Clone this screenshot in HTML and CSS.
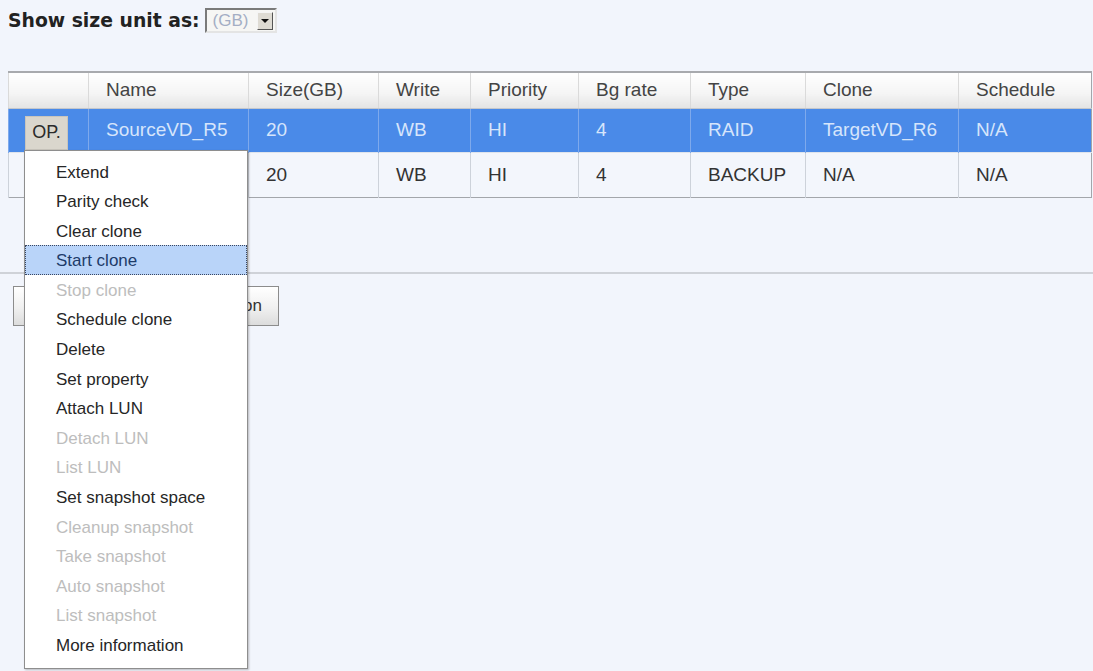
FILE: index.html
```html
<!DOCTYPE html>
<html lang="en">
<head>
  <meta charset="UTF-8" />
  <title>Virtual disks</title>
  <link rel="stylesheet" href="styles.css">
</head>
<body>

<div class="page">
  <!-- size unit selector -->
  <div class="toolbar">
    <span class="unit-label">Show size unit as:</span>
    <div class="unit-select">
      <span class="unit-value">(GB)</span>
      <span class="unit-arrow"><span class="tri"></span></span>
    </div>
  </div>

  <table class="vd-table">
    <thead>
      <tr>
        <th class="c-op"></th>
        <th class="c-name">Name</th>
        <th class="c-size">Size(GB)</th>
        <th class="c-write">Write</th>
        <th class="c-prio">Priority</th>
        <th class="c-bg">Bg rate</th>
        <th class="c-type">Type</th>
        <th class="c-clone">Clone</th>
        <th class="c-sched">Schedule</th>
      </tr>
    </thead>
    <tbody>
      <tr class="selected row-1">
        <td class="op-cell">
          <div class="op-wrap">
            <button class="op-btn">OP.</button>
            <!-- Operation menu for the selected disk -->
            <ul class="op-menu">
              <li>Extend</li>
              <li>Parity check</li>
              <li>Clear clone</li>
              <li class="active">Start clone</li>
              <li class="disabled">Stop clone</li>
              <li>Schedule clone</li>
              <li>Delete</li>
              <li>Set property</li>
              <li>Attach LUN</li>
              <li class="disabled">Detach LUN</li>
              <li class="disabled">List LUN</li>
              <li>Set snapshot space</li>
              <li class="disabled">Cleanup snapshot</li>
              <li class="disabled">Take snapshot</li>
              <li class="disabled">Auto snapshot</li>
              <li class="disabled">List snapshot</li>
              <li>More information</li>
            </ul>
          </div>
        </td>
        <td>SourceVD_R5</td>
        <td>20</td>
        <td>WB</td>
        <td>HI</td>
        <td>4</td>
        <td>RAID</td>
        <td>TargetVD_R6</td>
        <td>N/A</td>
      </tr>
      <tr class="row-2">
        <td class="op-cell"><button class="op-btn">OP.</button></td>
        <td>TargetVD_R6</td>
        <td>20</td>
        <td>WB</td>
        <td>HI</td>
        <td>4</td>
        <td>BACKUP</td>
        <td>N/A</td>
        <td>N/A</td>
      </tr>
    </tbody>
  </table>
</div>

<div class="divider"></div>

<div class="actions">
  <button class="action-btn">Create clone relation</button>
</div>

</body>
</html>
```

FILE: styles.css
```css
:root {
  --bg: #f2f5fc;
  --text: #333333;
  --menu-text: #262626;
  --disabled: #bdbdbd;
  --select-blue: #4a8ae8;
  --select-text: #d6e5fb;
  --grid: #cdd2da;
}

* {
  box-sizing: border-box;
}

body {
  margin: 0;
  background: var(--bg);
  color: var(--text);
  font-family: 'Liberation Sans', Arial, sans-serif;
  min-height: 100vh;
}

.page {
  padding: 8px 2px 0 8px;
}

/* top toolbar */
.toolbar {
  display: flex;
  align-items: center;
  height: 25px;
  gap: 5px;
}

.unit-label {
  font-family: 'DejaVu Sans', Verdana, sans-serif;
  font-weight: bold;
  font-size: 18.8px;
  color: #222;
}

.unit-select {
  display: flex;
  align-items: center;
  justify-content: space-between;
  width: 72px;
  height: 25px;
  background: #f6f6f4;
  border: 2px solid;
  border-color: #7a7a7a #e4e4e4 #e4e4e4 #7a7a7a;
  padding: 0 2px 0 6px;
}

.unit-value {
  font-size: 17px;
  color: #a4aec4;
}

.unit-arrow {
  display: flex;
  align-items: center;
  justify-content: center;
  width: 16px;
  height: 18px;
  background: #dedbd3;
  border: 1px solid;
  border-color: #f4f4f4 #555 #555 #f4f4f4;
}

.tri {
  width: 0;
  height: 0;
  border-left: 4px solid transparent;
  border-right: 4px solid transparent;
  border-top: 4px solid #111;
}

/* table */
.vd-table {
  margin-top: 38px;
  width: 1083px;
  border-collapse: collapse;
  table-layout: fixed;
  border: 1px solid #a3a6ab;
  border-top: 2px solid #a8aaae;
  font-size: 19px;
}

.vd-table th {
  height: 36px;
  font-weight: normal;
  text-align: left;
  padding: 0 0 0 17px;
  color: #444;
  background: linear-gradient(#ffffff, #f4f4f4 60%, #e4e4e4);
  border-left: 1px solid #dadada;
  border-bottom: 1px solid #c4c7cc;
}

.vd-table td {
  padding: 0 0 0 17px;
  border-left: 1px solid var(--grid);
  white-space: nowrap;
  overflow: hidden;
}

.c-op { width: 80px; }
.c-name { width: 160px; }
.c-size { width: 130px; }
.c-write { width: 92px; }
.c-prio { width: 108px; }
.c-bg { width: 112px; }
.c-type { width: 115px; }
.c-clone { width: 153px; }
.c-sched { width: 133px; }

.row-1 td {
  height: 44px;
  background: var(--select-blue);
  color: var(--select-text);
  border-left-color: #7ea9ec;
}

.row-2 td {
  height: 45px;
  background: #f3f6fc;
  color: #333;
  border-top: 1px solid #dfe4ec;
}

.vd-table td.op-cell {
  padding: 5px 0 0 16px;
  overflow: visible;
}

.op-wrap {
  position: relative;
}

.op-btn {
  display: block;
  width: 43px;
  height: 34px;
  padding: 0;
  font-family: 'Liberation Sans', Arial, sans-serif;
  font-size: 18px;
  color: #2a2a2a;
  background: #dad6cd;
  border: 1px solid #c9c5bc;
  text-align: center;
}

/* operation dropdown */
.op-menu {
  position: absolute;
  top: 100%;
  left: -1px;
  width: 224px;
  margin: 0;
  padding: 6px 0 8px;
  list-style: none;
  background: #ffffff;
  border: 1px solid #8e8e8e;
  box-shadow: 1px 1px 2px rgba(0, 0, 0, 0.25);
  z-index: 10;
}

.op-menu li {
  height: 29.6px;
  line-height: 29.6px;
  padding-left: 30px;
  font-size: 17px;
  color: var(--menu-text);
  border: 1px solid transparent;
}

.op-menu li.disabled {
  color: var(--disabled);
}

.op-menu li.active {
  background: #b9d4f9;
  color: #1d3b69;
  border: 1px dotted #3a4660;
}

/* lower section */
.divider {
  margin-top: 74px;
  border-top: 2px solid #cfd2d8;
}

.actions {
  padding: 12px 0 0 13px;
}

.action-btn {
  width: 266px;
  height: 40px;
  font-family: 'Liberation Sans', Arial, sans-serif;
  font-size: 17px;
  color: #333;
  text-align: right;
  padding: 0 16px 0 0;
  background: linear-gradient(#ffffff, #f0f0f0 55%, #dcdcdc);
  border: 1px solid #8c8c8c;
}
```
